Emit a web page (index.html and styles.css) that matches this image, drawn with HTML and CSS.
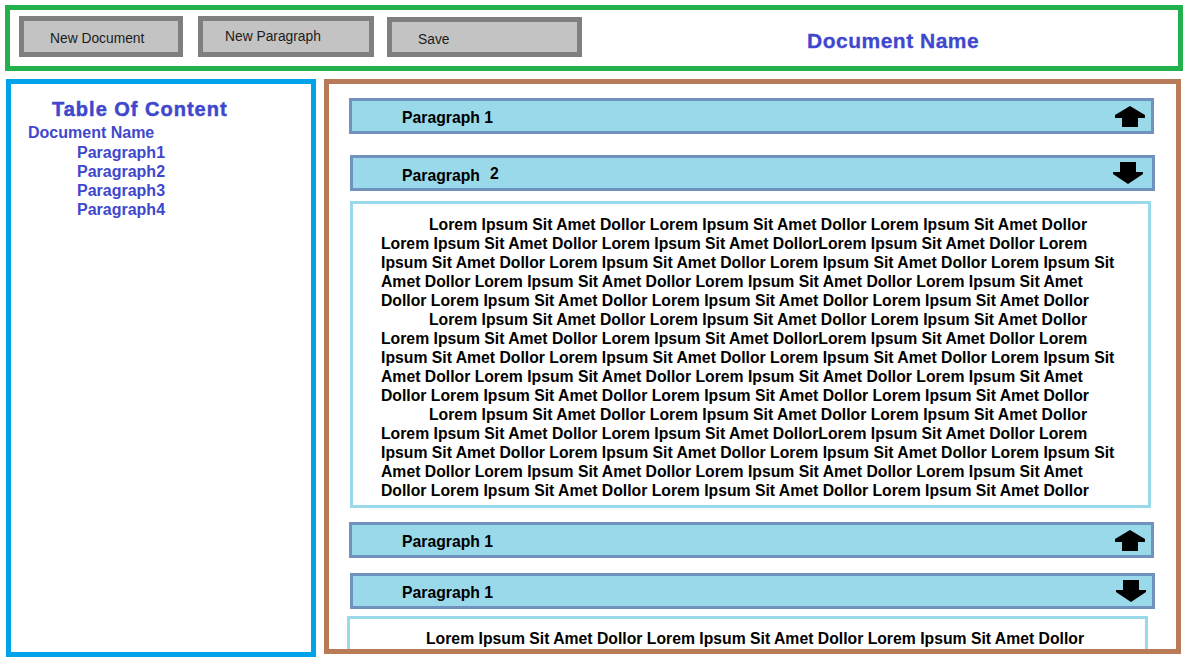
FILE: index.html
```html
<!DOCTYPE html>
<html lang="en">
<head>
<meta charset="utf-8">
<title>Document Editor</title>
<link rel="stylesheet" href="styles.css">
</head>
<body>
<div class="page">
  <header class="topbar">
    <button class="btn btn-doc">New Document</button>
    <button class="btn btn-para">New Paragraph</button>
    <button class="btn btn-save">Save</button>
    <h1 class="doc-title">Document Name</h1>
  </header>
  <div class="main">
    <nav class="toc">
      <h2 class="toc-title">Table Of Content</h2>
      <div class="toc-doc">Document Name</div>
      <ul class="toc-list">
        <li class="toc-item">Paragraph1</li>
        <li class="toc-item">Paragraph2</li>
        <li class="toc-item">Paragraph3</li>
        <li class="toc-item">Paragraph4</li>
      </ul>
    </nav>
    <section class="editor">
      <div class="acc-head">
        <span class="acc-label">Paragraph 1</span>
        <svg class="arrow" width="30" height="21" viewBox="0 0 30 21"><path d="M15 0 L30 9 L30 12 L23 12 L23 21 L7 21 L7 12 L0 12 L0 9 Z" fill="#000"/></svg>
      </div>
      <div class="acc-head acc-head-b">
        <span class="acc-label">Paragraph<span class="num-raised">2</span></span>
        <svg class="arrow" width="30" height="22" viewBox="0 0 30 22"><path d="M7 0 L23 0 L23 10 L30 10 L30 12 L15 22 L0 12 L0 10 L7 10 Z" fill="#000"/></svg>
      </div>
      <div class="acc-body">
        <div class="line indent">Lorem Ipsum Sit Amet Dollor Lorem Ipsum Sit Amet Dollor Lorem Ipsum Sit Amet Dollor</div>
        <div class="line">Lorem Ipsum Sit Amet Dollor Lorem Ipsum Sit Amet DollorLorem Ipsum Sit Amet Dollor Lorem</div>
        <div class="line">Ipsum Sit Amet Dollor Lorem Ipsum Sit Amet Dollor Lorem Ipsum Sit Amet Dollor Lorem Ipsum Sit</div>
        <div class="line">Amet Dollor Lorem Ipsum Sit Amet Dollor Lorem Ipsum Sit Amet Dollor Lorem Ipsum Sit Amet</div>
        <div class="line">Dollor Lorem Ipsum Sit Amet Dollor Lorem Ipsum Sit Amet Dollor Lorem Ipsum Sit Amet Dollor</div>
        <div class="line indent">Lorem Ipsum Sit Amet Dollor Lorem Ipsum Sit Amet Dollor Lorem Ipsum Sit Amet Dollor</div>
        <div class="line">Lorem Ipsum Sit Amet Dollor Lorem Ipsum Sit Amet DollorLorem Ipsum Sit Amet Dollor Lorem</div>
        <div class="line">Ipsum Sit Amet Dollor Lorem Ipsum Sit Amet Dollor Lorem Ipsum Sit Amet Dollor Lorem Ipsum Sit</div>
        <div class="line">Amet Dollor Lorem Ipsum Sit Amet Dollor Lorem Ipsum Sit Amet Dollor Lorem Ipsum Sit Amet</div>
        <div class="line">Dollor Lorem Ipsum Sit Amet Dollor Lorem Ipsum Sit Amet Dollor Lorem Ipsum Sit Amet Dollor</div>
        <div class="line indent">Lorem Ipsum Sit Amet Dollor Lorem Ipsum Sit Amet Dollor Lorem Ipsum Sit Amet Dollor</div>
        <div class="line">Lorem Ipsum Sit Amet Dollor Lorem Ipsum Sit Amet DollorLorem Ipsum Sit Amet Dollor Lorem</div>
        <div class="line">Ipsum Sit Amet Dollor Lorem Ipsum Sit Amet Dollor Lorem Ipsum Sit Amet Dollor Lorem Ipsum Sit</div>
        <div class="line">Amet Dollor Lorem Ipsum Sit Amet Dollor Lorem Ipsum Sit Amet Dollor Lorem Ipsum Sit Amet</div>
        <div class="line">Dollor Lorem Ipsum Sit Amet Dollor Lorem Ipsum Sit Amet Dollor Lorem Ipsum Sit Amet Dollor</div>
      </div>
      <div class="acc-head acc-head-c">
        <span class="acc-label">Paragraph 1</span>
        <svg class="arrow" width="30" height="21" viewBox="0 0 30 21"><path d="M15 0 L30 9 L30 12 L23 12 L23 21 L7 21 L7 12 L0 12 L0 9 Z" fill="#000"/></svg>
      </div>
      <div class="acc-head acc-head-d">
        <span class="acc-label">Paragraph 1</span>
        <svg class="arrow" width="30" height="22" viewBox="0 0 30 22"><path d="M7 0 L23 0 L23 10 L30 10 L30 12 L15 22 L0 12 L0 10 L7 10 Z" fill="#000"/></svg>
      </div>
      <div class="acc-body acc-body-b">
        <div class="line indent">Lorem Ipsum Sit Amet Dollor Lorem Ipsum Sit Amet Dollor Lorem Ipsum Sit Amet Dollor</div>
      </div>
    </section>
  </div>
</div>
</body>
</html>
```

FILE: styles.css
```css
html, body {
  margin: 0;
  padding: 0;
  background: #ffffff;
}

body {
  font-family: "Liberation Sans", Arial, sans-serif;
  color: #000000;
}

.page {
  padding: 5px 0 0 5px;
}

/* ---------- top bar ---------- */
.topbar {
  box-sizing: border-box;
  width: 1178px;
  height: 66px;
  border: 5px solid #22b14c;
  padding: 6px 0 0 9px;
  display: flex;
  align-items: flex-start;
}

.btn {
  box-sizing: border-box;
  height: 41px;
  margin: 0;
  border: 5px solid #7f7f7f;
  background: #c3c3c3;
  font-family: "Liberation Sans", Arial, sans-serif;
  font-size: 13.8px;
  color: #1b1b1b;
  display: flex;
  align-items: center;
  text-align: left;
  border-radius: 0;
  cursor: pointer;
}

.btn-doc {
  width: 164px;
  padding: 3px 0 0 26px;
}

.btn-para {
  width: 176px;
  margin-left: 15px;
  padding: 0 0 0 22px;
}

.btn-save {
  width: 195px;
  height: 40px;
  margin-left: 13px;
  margin-top: 1px;
  padding: 4px 0 0 26px;
}

.doc-title {
  margin: 13px 0 0 225px;
  font-size: 21px;
  line-height: 24px;
  font-weight: bold;
  letter-spacing: 0.5px;
  color: #3f48cc;
  -webkit-text-stroke: 0.3px #3f48cc;
}

/* ---------- main area ---------- */
.main {
  display: flex;
  align-items: flex-start;
  margin-top: 8px;
}

.toc {
  box-sizing: border-box;
  width: 310px;
  height: 578px;
  margin-left: 1px;
  border: 5px solid #00a2e8;
  padding-top: 13px;
  color: #3f48cc;
  font-weight: bold;
}

.toc-title {
  margin: 0 0 0 41px;
  font-size: 20px;
  line-height: 24px;
  letter-spacing: 1px;
  font-weight: bold;
  -webkit-text-stroke: 0.5px #3f48cc;
}

.toc-doc {
  margin-top: 2px;
  padding-left: 17px;
  font-size: 16px;
  line-height: 19px;
}

.toc-list {
  list-style: none;
  margin: 1px 0 0 0;
  padding: 0;
}

.toc-item {
  padding-left: 66px;
  font-size: 16px;
  line-height: 19px;
}

/* ---------- editor ---------- */
.editor {
  box-sizing: border-box;
  width: 857px;
  height: 575px;
  margin-left: 8px;
  border: 5px solid #b97a57;
  padding: 14px 0 0 20px;
  overflow: hidden;
}

.acc-head {
  box-sizing: border-box;
  width: 805px;
  height: 36px;
  border: 3px solid #7092be;
  background: #99d9ea;
  display: flex;
  align-items: center;
  justify-content: space-between;
  padding: 0 6px 0 50px;
  font-size: 15.75px;
  font-weight: bold;
}

.acc-label {
  padding-top: 4px;
}

.acc-head-b {
  margin-top: 21px;
  margin-left: 1px;
  padding-left: 49px;
  padding-right: 9px;
}

.acc-head-c {
  margin-top: 14px;
}

.acc-head-d {
  margin-top: 15px;
  margin-left: 1px;
  padding-left: 49px;
}

.num-raised {
  margin-left: 10px;
  vertical-align: 2px;
}

.arrow {
  display: block;
  flex: none;
}

.acc-body {
  box-sizing: border-box;
  width: 801px;
  margin: 10px 0 0 1px;
  border: 3px solid #99d9ea;
  padding: 11px 0 5px 28px;
  font-size: 15.75px;
  font-weight: bold;
  line-height: 19px;
}

.acc-body-b {
  margin: 7px 0 0 -2px;
  padding-top: 10px;
  padding-bottom: 20px;
}

.line {
  white-space: nowrap;
}

.indent {
  padding-left: 48px;
}
```
